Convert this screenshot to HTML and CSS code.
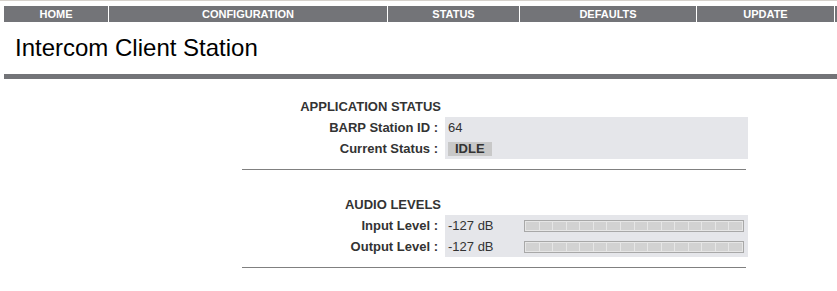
FILE: index.html
```html
<!DOCTYPE html>
<html lang="en">
<head>
  <meta charset="UTF-8">
  <meta name="viewport" content="width=device-width, initial-scale=1.0">
  <title>Intercom Client Station</title>
  <link rel="stylesheet" href="styles.css">
</head>
<body>
  <div class="nav">
    <a class="nav-home" href="#">HOME</a>
    <a class="nav-config" href="#">CONFIGURATION</a>
    <a class="nav-status" href="#">STATUS</a>
    <a class="nav-defaults" href="#">DEFAULTS</a>
    <a class="nav-update" href="#">UPDATE</a>
    <span class="nav-rest"></span>
  </div>

  <h1>Intercom Client Station</h1>
  <div class="rule"></div>

  <div class="content">
    <div class="panel">
      <div class="heading">APPLICATION STATUS</div>
      <div class="blank"></div>
      <div class="label">BARP Station ID :</div>
      <div class="value">64</div>
      <div class="label">Current Status :</div>
      <div class="value"><span class="badge">IDLE</span></div>
    </div>
    <hr>

    <div class="panel">
      <div class="heading">AUDIO LEVELS</div>
      <div class="blank"></div>
      <div class="label">Input Level :</div>
      <div class="value level">
        <span class="db">-127 dB</span>
        <div class="meter">
          <span></span><span></span><span></span><span></span>
          <span></span><span></span><span></span><span></span>
          <span></span><span></span><span></span><span></span>
          <span></span><span></span><span></span><span></span>
        </div>
      </div>
      <div class="label">Output Level :</div>
      <div class="value level">
        <span class="db">-127 dB</span>
        <div class="meter">
          <span></span><span></span><span></span><span></span>
          <span></span><span></span><span></span><span></span>
          <span></span><span></span><span></span><span></span>
          <span></span><span></span><span></span><span></span>
        </div>
      </div>
    </div>
    <hr>
  </div>
</body>
</html>
```

FILE: styles.css
```css
html, body {
  overflow: hidden;
}

body {
  font-family: 'Liberation Sans', Arial, sans-serif;
  background-color: #FFFFFF;
  color: #333;
  margin: 0;
  border-top: 1px solid #D6D2CC;
}

.nav {
  display: flex;
  gap: 1px;
  margin: 5px 0 0 4px;
  height: 16px;
}

.nav a,
.nav-rest {
  background-color: #737478;
  color: #FFFFFF;
  font-size: 11px;
  font-weight: bold;
  line-height: 16px;
  text-align: center;
  text-decoration: none;
}

.nav-home { width: 104px; }
.nav-config { width: 278px; }
.nav-status { width: 131px; }
.nav-defaults { width: 176px; }
.nav-update { width: 137px; }
.nav-rest { flex: 1; }

h1 {
  font-size: 24px;
  font-weight: normal;
  line-height: 28px;
  color: #000;
  margin: 12px 0 12px 15px;
}

.rule {
  height: 5px;
  margin-left: 4px;
  background-color: #737478;
}

.content {
  margin: 17px 0 0 242px;
  width: 506px;
}

.panel {
  display: grid;
  grid-template-columns: 203px 303px;
  font-size: 13px;
  line-height: 21px;
}

.heading,
.label {
  font-weight: bold;
  text-align: right;
  padding-right: 4px;
}

.label {
  padding-right: 7px;
}

.value {
  background-color: #E5E6EA;
  padding-left: 3px;
  display: flex;
  align-items: center;
}

.badge {
  background-color: #C8C8C8;
  font-weight: bold;
  line-height: 14px;
  padding: 0 7px;
}

.db {
  width: 76px;
}

.meter {
  display: flex;
  gap: 1px;
  width: 220px;
  height: 12px;
  padding: 1px;
  box-sizing: border-box;
  border: 1px solid #A8A8A8;
  background-color: #E6E6E6;
}

.meter span {
  flex: 1;
  background-color: #D2D2D2;
}

hr {
  width: 504px;
  margin: 10px 0 24px 0;
  border: none;
  border-top: 1px solid #808080;
  height: 0;
}
```
